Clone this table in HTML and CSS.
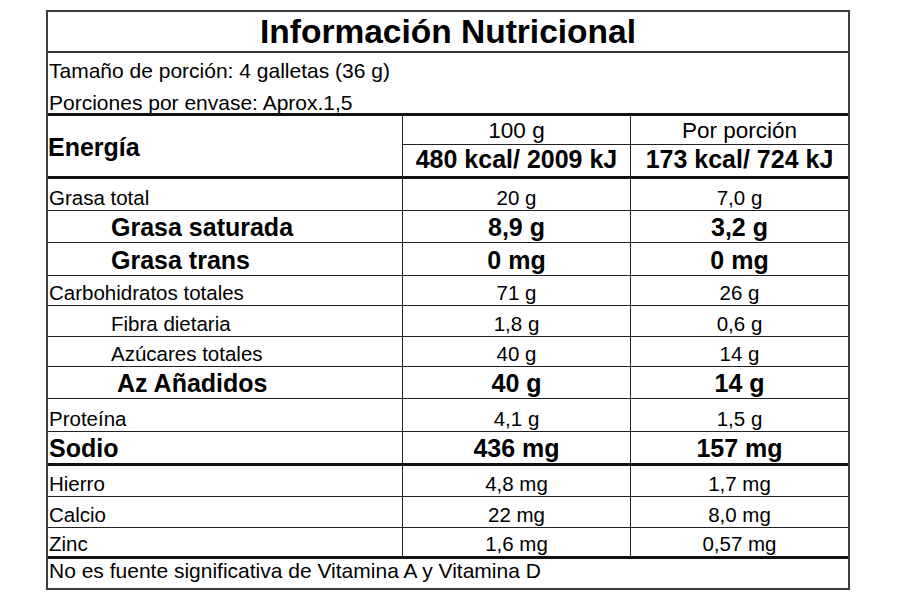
FILE: index.html
```html
<!DOCTYPE html>
<html lang="es">
<head>
<meta charset="utf-8">
<title>Información Nutricional</title>
<link rel="stylesheet" href="styles.css">
</head>
<body>
<div class="label">
  <div class="title">Información Nutricional</div>
  <div class="info info-1"><span>Tamaño de porción: 4 galletas (36 g)</span></div>
  <div class="info info-2"><span>Porciones por envase: Aprox.1,5</span></div>

  <div class="energy">
    <div class="energy-label">Energía</div>
    <div class="eh">100 g</div>
    <div class="eh last">Por porción</div>
    <div class="ev">480 kcal/ 2009 kJ</div>
    <div class="ev last">173 kcal/ 724 kJ</div>
  </div>

  <div class="row r32"><div class="cell name">Grasa total</div><div class="cell val">20 g</div><div class="cell val">7,0 g</div></div>
  <div class="row r32 b"><div class="cell name ind">Grasa saturada</div><div class="cell val">8,9 g</div><div class="cell val">3,2 g</div></div>
  <div class="row r33 b"><div class="cell name ind">Grasa trans</div><div class="cell val">0 mg</div><div class="cell val">0 mg</div></div>
  <div class="row r30"><div class="cell name">Carbohidratos totales</div><div class="cell val">71 g</div><div class="cell val">26 g</div></div>
  <div class="row r31"><div class="cell name ind">Fibra dietaria</div><div class="cell val">1,8 g</div><div class="cell val">0,6 g</div></div>
  <div class="row r30"><div class="cell name ind">Azúcares totales</div><div class="cell val">40 g</div><div class="cell val">14 g</div></div>
  <div class="row r32 b"><div class="cell name ind2">Az Añadidos</div><div class="cell val">40 g</div><div class="cell val">14 g</div></div>
  <div class="row r33"><div class="cell name">Proteína</div><div class="cell val">4,1 g</div><div class="cell val">1,5 g</div></div>
  <div class="row r34 b thick"><div class="cell name">Sodio</div><div class="cell val">436 mg</div><div class="cell val">157 mg</div></div>
  <div class="row r31"><div class="cell name">Hierro</div><div class="cell val">4,8 mg</div><div class="cell val">1,7 mg</div></div>
  <div class="row r31"><div class="cell name">Calcio</div><div class="cell val">22 mg</div><div class="cell val">8,0 mg</div></div>
  <div class="row r31 thick"><div class="cell name">Zinc</div><div class="cell val">1,6 mg</div><div class="cell val">0,57 mg</div></div>

  <div class="footer">No es fuente significativa de Vitamina A y Vitamina D</div>
</div>
</body>
</html>
```

FILE: styles.css
```css
* {
  box-sizing: border-box;
}

body {
  margin: 0;
  background: #ffffff;
  font-family: "Liberation Sans", Arial, sans-serif;
  color: #000000;
}

.label {
  margin: 10px 0 0 46px;
  width: 804px;
  border: 2px solid #3c3c3c;
}

.title {
  height: 41px;
  border-bottom: 2px solid #333333;
  text-align: center;
  font-weight: bold;
  font-size: 33.5px;
  line-height: 38px;
  padding-top: 1px;
}

.info {
  display: flex;
  align-items: flex-end;
  font-size: 21px;
  padding-left: 1px;
}

.info-1 {
  height: 30px;
}

.info-2 {
  height: 33px;
  border-bottom: 3px solid #111111;
}

.info-2 span {
  margin-bottom: -2px;
}

/* Energy block */
.energy {
  display: grid;
  grid-template-columns: 355px 228px 1fr;
  grid-template-rows: 29px 31px;
  height: 63px;
  border-bottom: 3px solid #111111;
}

.energy-label {
  grid-row: 1 / 3;
  grid-column: 1;
  display: flex;
  align-items: center;
  font-weight: bold;
  font-size: 25px;
  border-right: 1px solid #222222;
  padding-top: 2px;
}

.eh {
  display: flex;
  justify-content: center;
  align-items: flex-end;
  font-size: 22.5px;
  border-bottom: 1px solid #222222;
  border-right: 1px solid #222222;
}

.ev {
  display: flex;
  justify-content: center;
  align-items: flex-end;
  font-size: 25px;
  font-weight: bold;
  border-right: 1px solid #222222;
  padding-bottom: 2px;
}

.eh.last,
.ev.last {
  border-right: none;
}

/* Nutrient rows */
.row {
  display: grid;
  grid-template-columns: 355px 228px 1fr;
  border-bottom: 1px solid #222222;
}

.row.thick {
  border-bottom: 3px solid #111111;
}

.r30 { height: 30px; }
.r31 { height: 31px; }
.r32 { height: 32px; }
.r33 { height: 33px; }
.r34 { height: 34px; }

.cell {
  display: flex;
  align-items: flex-end;
  font-size: 20.5px;
  white-space: nowrap;
}

.row.b .cell {
  font-weight: bold;
  font-size: 25px;
}

.cell.name {
  padding-left: 1px;
  border-right: 1px solid #222222;
}

.cell.name.ind {
  padding-left: 63px;
}

.cell.name.ind2 {
  padding-left: 69px;
}

.cell.val {
  justify-content: center;
}

.cell.val:nth-child(2) {
  border-right: 1px solid #222222;
}

.footer {
  height: 29px;
  font-size: 21px;
  padding-left: 1px;
  line-height: 24px;
}
```
